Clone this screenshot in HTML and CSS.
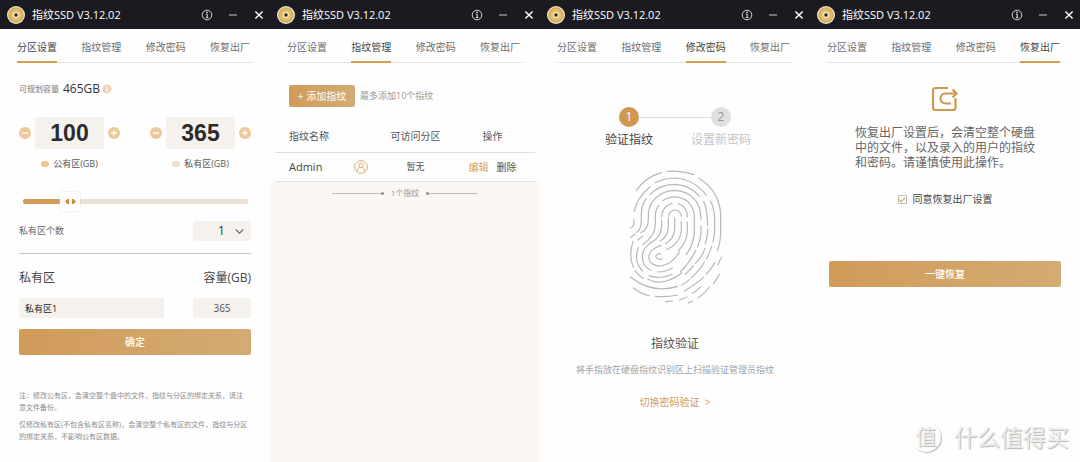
FILE: index.html
```html
<!DOCTYPE html>
<html lang="zh-CN">
<head>
<meta charset="utf-8">
<title>指纹SSD V3.12.02</title>
<link rel="stylesheet" href="styles.css">
</head>
<body>
<svg class="defs" aria-hidden="true">
  <defs>
    <radialGradient id="gold"><stop offset="0" stop-color="#f3dc9b"/><stop offset=".6" stop-color="#e2bd6b"/><stop offset="1" stop-color="#d2a653"/></radialGradient>
    <symbol id="disc" viewBox="0 0 18 18"><circle cx="9" cy="9" r="9" fill="#f1e6d2"/><circle cx="9" cy="9" r="7.8" fill="url(#gold)"/><circle cx="9" cy="9" r="3" fill="#f6e6b9"/><circle cx="9" cy="9" r="1.7" fill="#2a2420"/></symbol>
    <symbol id="info" viewBox="0 0 12 12"><g fill="none" stroke="#e4e4e6"><circle cx="6" cy="6" r="4.8" stroke-width=".9"/><path d="M5 5.2h1.2v3.3M4.8 8.6h2.6" stroke-width="1"/></g><circle cx="6" cy="3.4" r=".8" fill="#e4e4e6"/></symbol>
    <symbol id="min" viewBox="0 0 12 12"><path d="M2 6h8" stroke="#c9c9cb" stroke-width="1"/></symbol>
    <symbol id="close" viewBox="0 0 12 12"><path d="M2.4 2.4l7.2 7.2M9.6 2.4l-7.2 7.2" stroke="#fff" stroke-width="1.4"/></symbol>
    <symbol id="minus" viewBox="0 0 12 12"><circle cx="6" cy="6" r="6" fill="#edc899"/><path d="M3 6h6" stroke="#fff" stroke-width="1.4"/></symbol>
    <symbol id="plus" viewBox="0 0 12 12"><circle cx="6" cy="6" r="6" fill="#edc899"/><path d="M3.2 6h5.6M6 3.2v5.6" stroke="#fff" stroke-width="1.4"/></symbol>
  </defs>
</svg>
<main class="windows">

  <section class="window">
    <header class="titlebar">
      <svg class="disc"><use href="#disc"/></svg><h1 class="title">指纹SSD V3.12.02</h1>
      <button class="win-btn" aria-label="关于"><svg><use href="#info"/></svg></button>
      <button class="win-btn" aria-label="最小化"><svg><use href="#min"/></svg></button>
      <button class="win-btn" aria-label="关闭"><svg><use href="#close"/></svg></button>
    </header>
    <nav class="tabs"><a class="tab active" href="#p1">分区设置</a><a class="tab" href="#p2">指纹管理</a><a class="tab" href="#p3">修改密码</a><a class="tab" href="#p4">恢复出厂</a></nav>
    <form class="partition">
      <p class="capacity"><span>可规划容量</span><strong>465GB</strong>
        <svg class="hint" viewBox="0 0 10 10"><circle cx="5" cy="5" r="4.6" fill="#efd5b8"/><path d="M5 4.2v3.3M5 2.3v1" stroke="#fff" stroke-width="1.2"/></svg></p>
      <div class="steppers">
        <div class="stepper">
          <button type="button" class="step" aria-label="减少公有区"><svg><use href="#minus"/></svg></button>
          <input class="amount" id="pub" value="100">
          <button type="button" class="step" aria-label="增加公有区"><svg><use href="#plus"/></svg></button>
          <label class="legend" for="pub"><i class="dot"></i>公有区(GB)</label>
        </div>
        <div class="stepper">
          <button type="button" class="step" aria-label="减少私有区"><svg><use href="#minus"/></svg></button>
          <input class="amount" id="pri" value="365">
          <button type="button" class="step" aria-label="增加私有区"><svg><use href="#plus"/></svg></button>
          <label class="legend" for="pri"><i class="dot pale"></i>私有区(GB)</label>
        </div>
      </div>
      <input class="slider" type="range" min="20" max="465" value="100" aria-label="公有区容量">
      <div class="count-row">
        <label for="count">私有区个数</label>
        <span class="select-wrap"><select id="count" class="select"><option>1</option><option>2</option></select><svg class="chevron" viewBox="0 0 8 8"><path d="M.7 2.2L4 5.6l3.3-3.4" fill="none" stroke="#555" stroke-width="1"/></svg></span>
      </div>
      <div class="pair heads"><label for="name">私有区</label><label for="size">容量(GB)</label></div>
      <div class="pair"><input id="name" class="field name" value="私有区1"><input id="size" class="field size" value="365"></div>
      <button type="button" class="primary">确定</button>
      <div class="notes">
        <p>注：修改公有区，会清空整个盘中的文件，指纹与分区的绑定关系，请注意文件备份。</p>
        <p>仅修改私有区(不包含私有区名称)，会清空整个私有区的文件，指纹与分区的绑定关系，不影响公有区数据。</p>
      </div>
    </form>
  </section>

  <section class="window shaded">
    <header class="titlebar">
      <svg class="disc"><use href="#disc"/></svg><h1 class="title">指纹SSD V3.12.02</h1>
      <button class="win-btn" aria-label="关于"><svg><use href="#info"/></svg></button>
      <button class="win-btn" aria-label="最小化"><svg><use href="#min"/></svg></button>
      <button class="win-btn" aria-label="关闭"><svg><use href="#close"/></svg></button>
    </header>
    <div class="sheet">
      <nav class="tabs"><a class="tab" href="#p1">分区设置</a><a class="tab active" href="#p2">指纹管理</a><a class="tab" href="#p3">修改密码</a><a class="tab" href="#p4">恢复出厂</a></nav>
      <div class="add-row"><button class="add">+ 添加指纹</button><span>最多添加10个指纹</span></div>
      <table class="prints">
        <colgroup><col class="c-name"><col class="c-icon"><col class="c-area"><col></colgroup>
        <thead><tr><th class="first">指纹名称</th><th></th><th>可访问分区</th><th class="last">操作</th></tr></thead>
        <tbody><tr><td class="first user">Admin</td>
          <td><svg class="avatar" viewBox="0 0 14 14"><g fill="none" stroke="#dcae72" stroke-width="1"><circle cx="7" cy="7" r="6.4"/><circle cx="7" cy="5.4" r="2.3"/><path d="M3.2 11.6C3.3 9.4 4.6 8.2 5.6 7.4M10.8 11.6C10.7 9.4 9.4 8.2 8.4 7.4"/></g></svg></td>
          <td class="none">暂无</td><td class="last"><a class="edit" href="#edit">编辑</a><a href="#delete">删除</a></td></tr></tbody>
      </table>
    </div>
    <p class="total"><i class="rule left"></i>1个指纹<i class="rule right"></i></p>
  </section>

  <section class="window">
    <header class="titlebar">
      <svg class="disc"><use href="#disc"/></svg><h1 class="title">指纹SSD V3.12.02</h1>
      <button class="win-btn" aria-label="关于"><svg><use href="#info"/></svg></button>
      <button class="win-btn" aria-label="最小化"><svg><use href="#min"/></svg></button>
      <button class="win-btn" aria-label="关闭"><svg><use href="#close"/></svg></button>
    </header>
    <nav class="tabs"><a class="tab" href="#p1">分区设置</a><a class="tab" href="#p2">指纹管理</a><a class="tab active" href="#p3">修改密码</a><a class="tab" href="#p4">恢复出厂</a></nav>
    <div class="verify">
      <ol class="steps"><li class="stage current"><b>1</b><span>验证指纹</span></li><li class="stage"><b>2</b><span>设置新密码</span></li></ol>
      <svg class="fingerprint" viewBox="0 0 300 420" aria-label="指纹"><g fill="none" stroke="#b8b8b8" stroke-width="3.6" stroke-linecap="round">
        <path d="M34 74Q60 34 110 19M127 16Q165 12 206 26M221 37C265 62 287 105 287 150V200Q286 232 277 254"/>
        <path d="M28 137Q35 95 75 63M90 50Q118 37 150 36Q207 39 244 88M257 105Q270 132 269 170Q270 205 264 228M248 190Q247 218 240 234"/>
        <path d="M27 160Q29 181 17 186M64 98Q49 118 49 145V165Q48 190 36 199M75 86Q102 56 150 55Q193 57 223 90M236 106Q248 132 248 178"/>
        <path d="M38 222L53 211M17 214L30 204M48 200Q70 190 70 160V145C72 105 105 74 150 73C200 76 228 110 228 160"/>
        <path d="M53 236Q91 210 91 175V150Q91 132 101 119M113 104Q150 80 188 106Q207 125 208 150V200Q205 238 184 266"/>
        <path d="M110 153Q112 120 141 112M160 113Q187 122 187 152M131 151A19 19 0 0 1 169 151"/>
        <path d="M110 162V182Q108 212 80 229C42 252 44 295 78 314M130 156V185Q128 212 106 225M149 156V188Q148 218 121 233M169 166V192Q166 233 126 250M187 168V196Q185 232 160 254"/>
        <path d="M108 238C58 253 60 300 108 300Q142 294 163 258M107 263C86 262 88 285 113 279"/>
        <path d="M24 226Q10 268 25 304M40 244Q25 286 52 315M30 314Q42 330 56 338M97 318Q122 318 142 306"/>
        <path d="M228 178V200Q226 224 218 242M212 254Q197 286 166 318M68 339Q112 364 171 321M72 329Q105 342 142 324"/>
        <path d="M17 333Q80 385 158 361M25 366Q45 382 72 389M91 391Q125 394 158 387M170 357Q184 349 194 340M240 247Q231 274 211 292M205 300L180 326"/>
        <path d="M260 241Q252 265 244 280M238 288Q226 311 199 335M270 289Q260 309 244 324M236 334Q216 352 178 375M289 274L278 297M283 325L266 352M228 362Q216 374 203 382M254 363Q239 382 219 396M122 407L143 405M163 402L186 393M190 411L203 405"/>
      </g></svg>
      <h2 class="verify-title">指纹验证</h2>
      <p class="verify-text">将手指放在硬盘指纹识别区上扫描验证管理员指纹</p>
      <a class="switch" href="#password">切换密码验证&nbsp; &gt;</a>
    </div>
  </section>

  <section class="window">
    <header class="titlebar">
      <svg class="disc"><use href="#disc"/></svg><h1 class="title">指纹SSD V3.12.02</h1>
      <button class="win-btn" aria-label="关于"><svg><use href="#info"/></svg></button>
      <button class="win-btn" aria-label="最小化"><svg><use href="#min"/></svg></button>
      <button class="win-btn" aria-label="关闭"><svg><use href="#close"/></svg></button>
    </header>
    <nav class="tabs"><a class="tab" href="#p1">分区设置</a><a class="tab" href="#p2">指纹管理</a><a class="tab" href="#p3">修改密码</a><a class="tab active" href="#p4">恢复出厂</a></nav>
    <div class="restore">
      <svg class="restore-icon" viewBox="0 0 28 26"><g fill="none" stroke="#cf9850" stroke-width="2.2"><path d="M17 2H4.500Q2 2 2 4.500V21.500Q2 24 4.500 24H22Q24.500 24 24.500 21.500V12"/><path d="M25 7.500H14.500A5 5 0 0 0 14.500 17.500H20"/><path d="M21.500 3.500L25.500 7.500L21.500 11.500"/></g></svg>
      <p class="warning">恢复出厂设置后，会清空整个硬盘<br>中的文件，以及录入的用户的指纹<br>和密码。请谨慎使用此操作。</p>
      <label class="agree"><input type="checkbox" checked>同意恢复出厂设置</label>
      <button class="primary">一键恢复</button>
    </div>
    <p class="watermark"><span class="seal">值</span>什么值得买</p>
  </section>
</main>
</body>
</html>
```
FILE: styles.css
```css
* { box-sizing: border-box; }
body { margin: 0; background: #fefefe; color: #555; font: 10px/16px "Open Sans", "Noto Sans CJK SC", sans-serif; }
h1, h2, p, ol { margin: 0; padding: 0; font-weight: 400; }
a { color: inherit; text-decoration: none; }
button, input, select { font: inherit; color: inherit; margin: 0; padding: 0; border: 0; background: none; outline: 0; }
svg { display: block; }
.defs { position: absolute; width: 0; height: 0; }
.windows { display: grid; grid-template-columns: repeat(4, 1fr); min-height: 100vh; }
.window { position: relative; min-width: 0; background: #fefefe; }
.shaded { background: #faf7f4; }

.titlebar { display: flex; align-items: center; gap: 14px; height: 29px; padding: 0 5px 0 7px; background: #1b1a20; color: #fff; }
.disc { width: 18px; height: 18px; margin-right: -7px; flex: none; }
.title { flex: 1; font-size: 11px; white-space: nowrap; }
.win-btn, .win-btn svg { width: 12px; height: 12px; }

.tabs { display: flex; justify-content: space-between; height: 34px; margin: 0 17px; padding-right: 3px; box-shadow: inset 0 -1px #e2e2e2; }
.tab { padding-top: 10px; color: #6d6d6d; }
.tab.active { color: #444; border-bottom: 2px solid #d3a052; }

.partition { padding: 18px 19px 0; }
.capacity { display: flex; align-items: center; gap: 4px; font-size: 8px; color: #777; }
.capacity strong { font-size: 12px; font-weight: 400; color: #333; }
.hint { width: 10px; height: 10px; margin-left: -2px; }
.steppers { display: flex; justify-content: space-between; margin-top: 20px; }
.stepper { display: grid; grid-template-columns: 12px 69px 12px; column-gap: 4px; align-items: center; }
.step, .step svg { width: 12px; height: 12px; }
.amount { width: 100%; height: 32px; border-radius: 2px; background: #f5f2ed; color: #2b2b2b; text-align: center; font: bold 23px "Liberation Sans", sans-serif; }
.legend { grid-column: 1 / -1; display: flex; align-items: center; justify-content: center; gap: 4px; margin-top: 7px; font-size: 9px; }
.dot { width: 8px; height: 6px; border-radius: 3px; background: #ecc591; }
.dot.pale { background: #ebdfd0; }
.slider { display: block; appearance: none; width: calc(100% - 7px); height: 20px; margin: 19px 3px 0 4px; background: none; }
.slider::-webkit-slider-runnable-track { height: 5px; border-radius: 2px; background: linear-gradient(90deg, #d09c57 20%, #eadfd2 0); }
.slider::-webkit-slider-thumb { appearance: none; width: 20px; height: 19px; margin-top: -7px; border-radius: 2px; box-shadow: 0 0 2px #d8d0c8; background: conic-gradient(from 50deg at 0 50%, #d18d3c 80deg, transparent 0) 5px 6px / 4px 7px no-repeat, conic-gradient(from 230deg at 100% 50%, #d18d3c 80deg, transparent 0) 12px 6px / 4px 7px no-repeat, #fff; }
.count-row { display: flex; align-items: center; justify-content: space-between; padding: 10px 0 12px; border-bottom: 1px solid #cacaca; font-size: 9px; color: #666; }
.select-wrap { position: relative; }
.select { display: block; appearance: none; width: 58px; height: 20px; padding-left: 25px; border-radius: 2px; background: #f5f2ed; font-size: 12px; color: #333; }
.chevron { position: absolute; right: 7px; top: 6px; width: 9px; height: 9px; pointer-events: none; }
.pair { display: flex; justify-content: space-between; }
.heads { padding: 16px 0 12px; font-size: 12px; color: #444; }
.field { height: 20px; border-radius: 2px; background: #f5f2ed; }
.name { width: 145px; padding-left: 6px; font-size: 9px; color: #222; }
.size { width: 58px; text-align: center; }
.primary { display: block; width: 100%; height: 26px; border-radius: 2px; background: linear-gradient(90deg, #d19b59, #d3ab74); color: #fff; font-weight: 500; }
.partition .primary { margin-top: 11px; }
.notes { padding: 35px 2px 0 0; font-size: 7px; line-height: 12px; color: #8c8c8c; }
.notes p + p { margin-top: 5px; }

.sheet { background: #fefefe; }
.add-row { display: flex; align-items: center; gap: 5px; padding: 22px 19px 20px; font-size: 9px; color: #999; }
.add { width: 66px; height: 22px; border-radius: 2px; background: linear-gradient(90deg, #d19b59, #d3ab74); color: #fff; font-size: 10px; }
.prints { width: calc(100% - 10px); margin: 0 5px; table-layout: fixed; border-spacing: 0; text-align: center; }
.c-name { width: 28%; }
.c-icon { width: 10%; }
.c-area { width: 32%; }
.prints th { height: 26px; padding: 0 0 7px; font-weight: 400; border-bottom: 1px solid #dedede; }
.prints td { height: 29px; padding: 0; border-bottom: 1px solid #dedede; }
.prints .first { padding-left: 14px; text-align: left; }
.prints .last { padding-right: 7px; }
.user { font-size: 11px; color: #444; }
.avatar { width: 14px; height: 14px; margin: auto; }
.none { font-size: 9px; }
.last a + a { margin-left: 8px; }
.edit { color: #d4a263; }
.total { display: flex; align-items: center; justify-content: center; gap: 7px; padding-top: 3px; font-size: 8px; color: #999; }
.rule { width: 52px; height: 3px; background: radial-gradient(circle, #999 1px, transparent 2px) 100% 0 / 3px 3px no-repeat, linear-gradient(#c2bdb9, #c2bdb9) 0 1px / 100% 1px no-repeat; }
.rule.right { background-position: 0 0, 0 1px; }

.verify { display: flex; flex-direction: column; align-items: center; padding-top: 44px; }
.steps { display: flex; list-style: none; }
.stage { position: relative; display: flex; flex-direction: column; align-items: center; gap: 5px; width: 92px; font-size: 12px; color: #c3c5ca; }
.stage b { z-index: 1; width: 20px; height: 20px; border-radius: 10px; background: #e0e0e0; color: #999; line-height: 20px; text-align: center; font-weight: 400; }
.stage.current { color: #444; }
.stage.current b { background: #cf9850; color: #fff; }
.stage.current::after { content: ""; position: absolute; top: 10px; left: 50%; width: 100%; height: 1px; background: #dedede; }
.fingerprint { width: 100px; height: 140px; margin-top: 18px; }
.verify-title { margin-top: 30px; font-size: 12px; color: #555; }
.verify-text { margin-top: 10px; font-size: 9px; color: #a2a2a2; }
.switch { margin-top: 16px; color: #cc9d60; }

.restore { display: flex; flex-direction: column; align-items: center; padding: 23px 19px 0; }
.restore-icon { width: 28px; height: 26px; }
.warning { margin-top: 13px; font-size: 12px; line-height: 15px; color: #666; }
.agree { display: flex; align-items: center; gap: 6px; margin-top: 21px; color: #444; }
.agree input { display: grid; place-items: center; appearance: none; width: 9px; height: 9px; border: 1px solid #c4bdb3; }
.agree input:checked::before { content: ""; width: 5px; height: 3px; margin-bottom: 1px; border: solid #d19b59; border-width: 0 0 1px 1px; transform: rotate(-45deg); }
.restore .primary { margin-top: 54px; }
.watermark { position: absolute; right: 11px; bottom: 10px; display: flex; align-items: center; gap: 13px; font-size: 23px; line-height: 30px; color: #ececec; text-shadow: 1px 1px 1px #b4b4b4; white-space: nowrap; }
.seal { width: 30px; height: 30px; border-radius: 50%; box-shadow: 1px 1px 1px #bbb; text-align: center; font-size: 21px; line-height: 28px; }
```
